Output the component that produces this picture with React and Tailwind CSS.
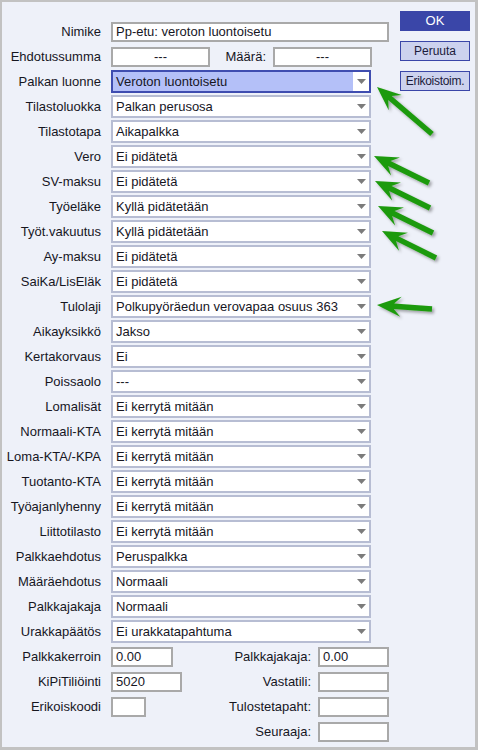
import React from "react";

const selects = [
  ["Palkan luonne", "Veroton luontoisetu", true],
  ["Tilastoluokka", "Palkan perusosa"],
  ["Tilastotapa", "Aikapalkka"],
  ["Vero", "Ei pidätetä"],
  ["SV-maksu", "Ei pidätetä"],
  ["Työeläke", "Kyllä pidätetään"],
  ["Työt.vakuutus", "Kyllä pidätetään"],
  ["Ay-maksu", "Ei pidätetä"],
  ["SaiKa/LisEläk", "Ei pidätetä"],
  ["Tulolaji", "Polkupyöräedun verovapaa osuus 363"],
  ["Aikayksikkö", "Jakso"],
  ["Kertakorvaus", "Ei"],
  ["Poissaolo", "---"],
  ["Lomalisät", "Ei kerrytä mitään"],
  ["Normaali-KTA", "Ei kerrytä mitään"],
  ["Loma-KTA/-KPA", "Ei kerrytä mitään"],
  ["Tuotanto-KTA", "Ei kerrytä mitään"],
  ["Työajanlyhenny", "Ei kerrytä mitään"],
  ["Liittotilasto", "Ei kerrytä mitään"],
  ["Palkkaehdotus", "Peruspalkka"],
  ["Määräehdotus", "Normaali"],
  ["Palkkajakaja", "Normaali"],
  ["Urakkapäätös", "Ei urakkatapahtuma"],
];

// head point first, then tail
const arrows = [
  [377, 87, 432, 134],
  [374, 156, 429, 183],
  [375, 181, 430, 208],
  [378, 206, 433, 233],
  [382, 231, 436, 258],
  [377, 305, 432, 309],
];

function arrowPoints([hx, hy, tx, ty]) {
  const len = Math.hypot(tx - hx, ty - hy);
  const dx = (tx - hx) / len;
  const dy = (ty - hy) / len;
  const nx = -dy;
  const ny = dx;
  const L = 24, W = 10, s = 2.7, back = 17;
  const p = (a, b) => `${a.toFixed(1)},${b.toFixed(1)}`;
  return [
    p(hx, hy),
    p(hx + dx * L + nx * W, hy + dy * L + ny * W),
    p(hx + dx * back + nx * s, hy + dy * back + ny * s),
    p(tx + nx * s, ty + ny * s),
    p(tx - nx * s, ty - ny * s),
    p(hx + dx * back - nx * s, hy + dy * back - ny * s),
    p(hx + dx * L - nx * W, hy + dy * L - ny * W),
  ].join(" ");
}

function Select({ value, active }) {
  return (
    <div className={`flex h-[23px] w-[260px] border-2 ${active ? "border-[#3f4db0] bg-[#b4c0f8]" : "border-[#b7bdd3] bg-white"}`}>
      <span className="flex-1 truncate pl-[3px] leading-[19px]">{value}</span>
      <span className="flex w-[16px] items-center justify-center bg-white">
        <svg width="9" height="5" viewBox="0 0 9 5"><path d="M0 0H9L4.5 5Z" fill="#7b7b7b" /></svg>
      </span>
    </div>
  );
}

function Field({ w, children, center }) {
  return (
    <div className={`h-[20px] border-2 border-[#a9a9a9] bg-white px-[3px] leading-[16px] ${center ? "text-center" : ""}`} style={{ width: w }}>
      {children}
    </div>
  );
}

function Label({ children, w = 99 }) {
  return <span className="shrink-0 text-right" style={{ width: w }}>{children}</span>;
}

export default function App() {
  return (
    <div className="relative h-[750px] w-[478px] border-b-[3px] border-l-2 border-r-[3px] border-t-2 border-[#c2c2c2] bg-[#eef1f9] text-[13px] text-[#16161f] font-['Liberation_Sans',Arial,sans-serif]">
      <div className="flex">
        <div className="w-[387px] pt-[20px]">
          <div className="flex h-[20px] items-center">
            <Label>Nimike</Label>
            <div className="ml-[10px]"><Field w={278}>Pp-etu: veroton luontoisetu</Field></div>
          </div>
          <div className="mt-[5px] flex h-[20px] items-center">
            <Label>Ehdotussumma</Label>
            <div className="ml-[10px]"><Field w={99} center>---</Field></div>
            <Label w={56}>Määrä:</Label>
            <div className="ml-[7px]"><Field w={99} center>---</Field></div>
          </div>
          <div className="mt-[3px] flex flex-col gap-[2px]">
            {selects.map(([label, value, active]) => (
              <div key={label} className="flex h-[23px] items-center">
                <Label>{label}</Label>
                <div className="ml-[10px]"><Select value={value} active={active} /></div>
              </div>
            ))}
          </div>
          <div className="mt-[4px] flex flex-col gap-[5px]">
            {[
              ["Palkkakerroin", 62, "0.00", "Palkkajakaja:", "0.00"],
              ["KiPiTiliöinti", 71, "5020", "Vastatili:", ""],
              ["Erikoiskoodi", 35, "", "Tulostetapaht:", ""],
              [null, 0, "", "Seuraaja:", ""],
            ].map(([l, w, v, rl, rv], i) => (
              <div key={i} className="flex h-[20px] items-center">
                <Label>{l}</Label>
                <div className="ml-[10px] w-[90px]">{l && <Field w={w}>{v}</Field>}</div>
                <Label w={110}>{rl}</Label>
                <div className="ml-[7px]"><Field w={71}>{rv}</Field></div>
              </div>
            ))}
          </div>
        </div>
        <div className="ml-[11px] flex w-[70px] flex-col gap-[10px] pt-[9px] text-[12px]">
          <div className="flex h-[20px] items-center justify-center border border-[#3a46a8] bg-[#3a46a8] text-[13px] text-white">OK</div>
          <div className="flex h-[20px] items-center justify-center border border-[#3a46a8] bg-[#ccd2ee] text-[#1b1b3b]">Peruuta</div>
          <div className="flex h-[20px] items-center justify-center border border-[#3a46a8] bg-[#ccd2ee] tracking-[-0.3px] text-[#1b1b3b]">Erikoistoim.</div>
        </div>
      </div>
      <svg className="pointer-events-none absolute left-[-2px] top-[-2px]" width="478" height="750">
        <defs>
          <filter id="sh" x="-20%" y="-20%" width="140%" height="140%">
            <feDropShadow dx="2" dy="2" stdDeviation="1.5" floodColor="#000" floodOpacity="0.35" />
          </filter>
        </defs>
        {arrows.map((a, i) => (
          <polygon key={i} points={arrowPoints(a)} fill="#1d9a0c" filter="url(#sh)" />
        ))}
      </svg>
    </div>
  );
}
